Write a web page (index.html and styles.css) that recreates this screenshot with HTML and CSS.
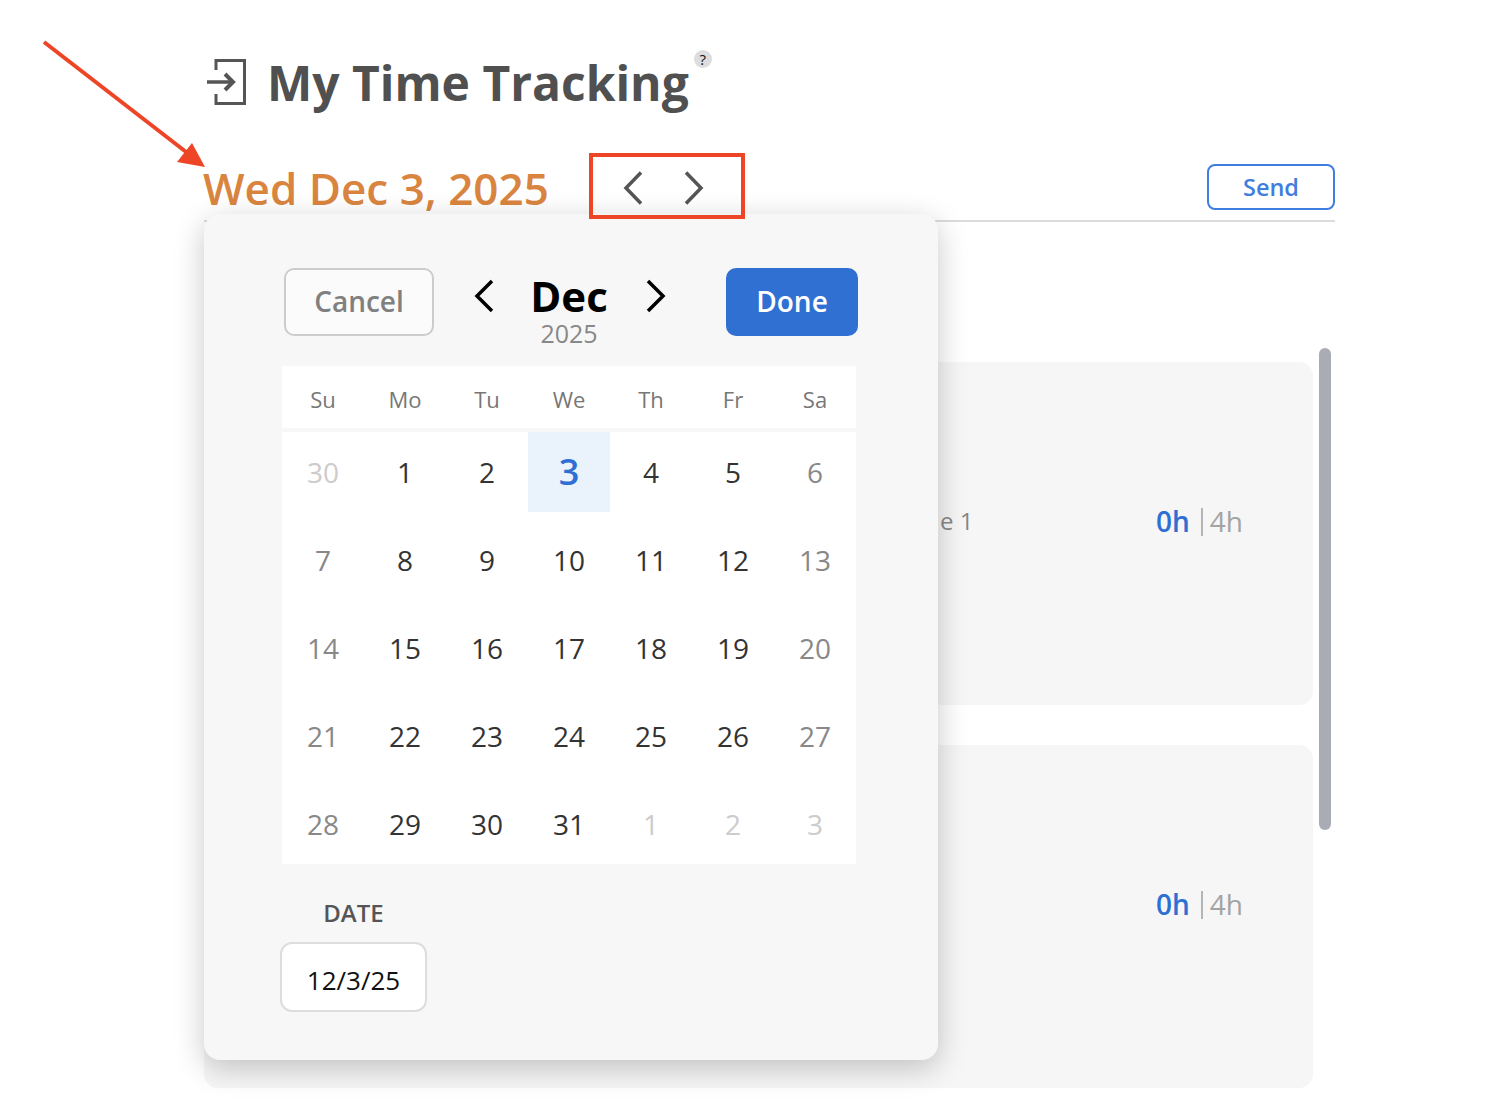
FILE: index.html
```html
<!DOCTYPE html>
<html lang="en">
<head>
  <meta charset="UTF-8">
  <meta name="viewport" content="width=device-width, initial-scale=1.0">
  <title>My Time Tracking</title>
  <link rel="stylesheet" href="styles.css">
</head>
<body>
  <main class="page">
    <!-- Page title -->
    <header class="title-row">
      <svg class="title-icon" width="40" height="48" viewBox="0 0 40 48" fill="none" stroke="#555" stroke-width="3">
        <path d="M9 12V2.5H37.500V45.500H9V36"/>
        <path d="M0 24H25" stroke-width="3.500"/>
        <path d="M18 16L26 24L18 32" stroke-width="4"/>
      </svg>
      <h1>My Time Tracking</h1>
      <span class="help">?</span>
    </header>

    <!-- Selected date and arrows -->
    <section class="date-row">
      <h2 class="date">Wed Dec 3, 2025</h2>
      <div class="date-nav">
        <button class="arrow" aria-label="Previous day">
          <svg width="20" height="34" viewBox="0 0 20 34" fill="none" stroke="#555" stroke-width="3.500"><path d="M18 1.500L3 17L18 32.500"/></svg>
        </button>
        <button class="arrow" aria-label="Next day">
          <svg width="20" height="34" viewBox="0 0 20 34" fill="none" stroke="#555" stroke-width="3.500"><path d="M2 1.500L17 17L2 32.500"/></svg>
        </button>
      </div>
      <button class="send">Send</button>
    </section>

    <!-- Entries -->
    <section class="entries">
      <div class="cards">
        <div class="card">
          <span class="card-name">e 1</span>
          <span class="hours"><b>0h</b><i></i>4h</span>
        </div>
        <div class="card">
          <span class="card-name"></span>
          <span class="hours"><b>0h</b><i></i>4h</span>
        </div>
      </div>
      <div class="scrollbar"></div>
    </section>
  </main>

  <!-- Date picker -->
  <div class="picker">
    <div class="picker-head">
      <button class="cancel">Cancel</button>
      <div class="month-nav">
        <svg width="22" height="34" viewBox="0 0 22 34" fill="none" stroke="#000" stroke-width="3.500"><path d="M19 2L4 17L19 32"/></svg>
        <div class="month">
          <strong>Dec</strong>
          <span>2025</span>
        </div>
        <svg class="month-next" width="22" height="34" viewBox="0 0 22 34" fill="none" stroke="#000" stroke-width="3.500"><path d="M3 2L18 17L3 32"/></svg>
      </div>
      <button class="done">Done</button>
    </div>

    <div class="calendar">
      <div class="weekdays">
        <span>Su</span><span>Mo</span><span>Tu</span><span>We</span><span>Th</span><span>Fr</span><span>Sa</span>
      </div>
      <div class="days">
        <span class="off">30</span><span>1</span><span>2</span><span class="today">3</span><span>4</span><span>5</span><span class="end">6</span>
        <span class="end">7</span><span>8</span><span>9</span><span>10</span><span>11</span><span>12</span><span class="end">13</span>
        <span class="end">14</span><span>15</span><span>16</span><span>17</span><span>18</span><span>19</span><span class="end">20</span>
        <span class="end">21</span><span>22</span><span>23</span><span>24</span><span>25</span><span>26</span><span class="end">27</span>
        <span class="end">28</span><span>29</span><span>30</span><span>31</span><span class="off">1</span><span class="off">2</span><span class="off">3</span>
      </div>
    </div>

    <div class="date-field">
      <label for="date-input">DATE</label>
      <input id="date-input" value="12/3/25">
    </div>
  </div>

  <!-- Annotations drawn on the screenshot -->
  <svg class="callout-arrow" width="220" height="180" viewBox="0 0 220 180">
    <path d="M44 42L190 155" stroke="#ee4527" stroke-width="4" fill="none"/>
    <polygon points="205,167 177,162 192,143" fill="#ee4527"/>
  </svg>
  <div class="callout-box"></div>
</body>
</html>
```

FILE: styles.css
```css
/* General */
body {
  font-family: "Open Sans", "Noto Sans", sans-serif;
  margin: 0;
  background-color: #fff;
  overflow: hidden;
}

button {
  font-family: inherit;
  cursor: pointer;
}

.page {
  height: 1116px;
  box-sizing: border-box;
  padding: 58px 157px 0 204px;
}

/* Title */
.title-row {
  display: flex;
  align-items: center;
  height: 48px;
}

.title-icon {
  margin-left: 3px;
  margin-right: 20px;
}

h1 {
  margin: 2px 0 0;
  font-size: 48px;
  font-weight: 700;
  line-height: 48px;
  color: #505050;
}

.help {
  align-self: flex-start;
  width: 18px;
  height: 18px;
  margin: -8px 0 0 5px;
  border-radius: 50%;
  background-color: #ddd;
  color: #111;
  font-size: 15px;
  line-height: 18px;
  text-align: center;
}

/* Date row */
.date-row {
  display: flex;
  align-items: center;
  height: 67px;
  margin-top: 47px;
  border-bottom: 2px solid #dcdcdc;
}

.date {
  margin: 2px 0 0 -1px;
  font-size: 44px;
  font-weight: 600;
  line-height: 56px;
  color: #d9853f;
}

.date-nav {
  display: flex;
  gap: 41px;
  margin-left: 74px;
  margin-top: 2px;
}

.arrow {
  display: flex;
  padding: 0;
  border: none;
  background: none;
}

.send {
  width: 128px;
  height: 46px;
  margin-left: auto;
  border: 2px solid #3f7ee0;
  border-radius: 8px;
  background-color: #fff;
  color: #3f7ee0;
  font-size: 23.5px;
  font-weight: 600;
}

/* Entries */
.entries {
  display: flex;
  gap: 6px;
  margin-top: 126px;
  padding-right: 4px;
}

.cards {
  flex: 1;
  display: flex;
  flex-direction: column;
  gap: 40px;
  padding-top: 14px;
}

.card {
  display: flex;
  justify-content: space-between;
  align-items: flex-start;
  height: 343px;
  box-sizing: border-box;
  padding: 142px 70px 0 736px;
  border-radius: 14px;
  background-color: #f6f6f6;
  color: #888;
  font-size: 24px;
  line-height: 34px;
}

.hours {
  display: flex;
  align-items: center;
  font-size: 28px;
  color: #a3a3a3;
}

.hours b {
  font-weight: 600;
  color: #2f6fd3;
}

.hours i {
  width: 2px;
  height: 28px;
  margin: 2px 7px 0 11px;
  background-color: #b5b5b5;
}

.scrollbar {
  width: 12px;
  height: 482px;
  border-radius: 6px;
  background-color: #a9acb5;
}

/* Date picker */
.picker {
  position: absolute;
  left: 204px;
  top: 214px;
  width: 734px;
  height: 846px;
  box-sizing: border-box;
  padding: 54px 80px 0 78px;
  border-radius: 16px;
  background-color: #f7f7f7;
  box-shadow: 0 8px 30px rgba(0, 0, 0, 0.22);
}

.picker-head {
  display: flex;
  align-items: flex-start;
  padding: 0 0 0 2px;
  height: 98px;
}

.cancel {
  width: 150px;
  height: 68px;
  padding-bottom: 3px;
  border: 2px solid #ccc;
  border-radius: 10px;
  background-color: #fbfbfb;
  color: #808080;
  font-size: 28px;
  font-weight: 600;
}

.month-nav {
  display: flex;
  align-items: flex-start;
  gap: 36px;
  margin-left: 39px;
  margin-top: 11px;
}

.month {
  display: flex;
  flex-direction: column;
  align-items: center;
  width: 76px;
  margin-top: -12px;
}

.month strong {
  font-size: 42px;
  line-height: 58px;
  color: #000;
}

.month span {
  font-size: 25px;
  line-height: 16px;
  color: #888;
}

.month-next {
  margin-left: 2px;
}

.done {
  width: 132px;
  height: 68px;
  padding-bottom: 3px;
  margin-left: auto;
  border: none;
  border-radius: 10px;
  background-color: #3170d3;
  color: #fff;
  font-size: 28px;
  font-weight: 600;
}

.calendar {
  width: 574px;
}

.weekdays {
  display: grid;
  grid-template-columns: repeat(7, 82px);
  height: 62px;
  margin-bottom: 4px;
  background-color: #fff;
  color: #777;
  font-size: 22px;
  line-height: 66px;
  text-align: center;
}

.days {
  display: grid;
  grid-template-columns: repeat(7, 82px);
  grid-auto-rows: 80px;
  row-gap: 8px;
  background-color: #fff;
  color: #333;
  font-size: 28px;
  line-height: 80px;
  text-align: center;
}

.days .end {
  color: #888;
}

.days .off {
  color: #ccc;
}

.days .today {
  background-color: #eaf2fb;
  color: #2f6fd3;
  font-size: 36px;
  font-weight: 600;
}

.date-field {
  display: flex;
  flex-direction: column;
  align-items: center;
  width: 147px;
  margin-top: 32px;
  margin-left: -2px;
}

.date-field label {
  color: #555;
  font-size: 24px;
  font-weight: 600;
  line-height: 34px;
}

.date-field input {
  width: 147px;
  height: 70px;
  box-sizing: border-box;
  margin-top: 12px;
  padding-top: 6px;
  border: 2px solid #ddd;
  border-radius: 12px;
  background-color: #fff;
  color: #111;
  font-family: inherit;
  font-size: 26px;
  text-align: center;
}

/* Annotations */
.callout-arrow {
  position: absolute;
  left: 0;
  top: 0;
}

.callout-box {
  position: absolute;
  left: 589px;
  top: 153px;
  width: 156px;
  height: 66px;
  box-sizing: border-box;
  border: 4px solid #ee4527;
}
```
